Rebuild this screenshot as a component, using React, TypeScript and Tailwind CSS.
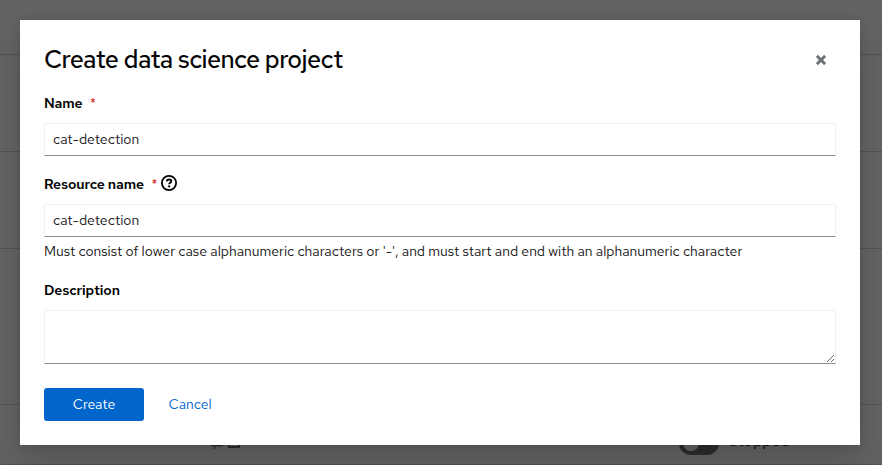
import React from 'react';

const inputClass =
  'block w-full border border-[#f0f0f0] border-b-[#8a8d90] bg-white px-2 text-[14px] leading-[21px] text-[#151515] outline-none';

function Required() {
  return <span className="ml-[7.5px] text-[13px] font-normal text-[#c9190b]">*</span>;
}

function HelpIcon() {
  return (
    <svg className="ml-[3.5px] h-4 w-4 -translate-y-[2px]" viewBox="0 0 16 16" fill="none" stroke="#030303">
      <circle cx="8" cy="8" r="7.1" strokeWidth="1.8" />
      <path d="M5.8 6.3C6 4.9 6.9 4.5 8.1 4.5c1.3 0 2.2.7 2.2 1.7 0 1.5-2.1 1.5-2.1 3" strokeWidth="1.9" />
      <circle cx="8.15" cy="11.4" r="1.1" fill="#030303" stroke="none" />
    </svg>
  );
}

function TableBehind() {
  return (
    <div className="h-[465px] w-full bg-white">
      <div className="h-[55px] border-b border-[#d2d2d2]" />
      <div className="h-[97px] border-b border-[#d2d2d2]" />
      <div className="h-[97px] border-b border-[#d2d2d2]" />
      <div className="h-[156px] border-b border-[#d2d2d2]" />
      <div className="flex h-[60px] items-start border-b border-[#d2d2d2] pt-[26px]">
        <svg className="ml-[210px] mt-[3px] h-[16px] w-[32px]" viewBox="0 0 32 16" fill="none" stroke="#6a6e73">
          <path d="M1 11.5H13M4.5 4V15M9 11.5H13" strokeWidth="1.3" />
          <rect x="19" y="3" width="10" height="10" strokeWidth="2" />
        </svg>
        <div className="ml-[437px] h-6 w-10 rounded-full bg-[#6a6e73] p-[4px]">
          <div className="h-4 w-4 rounded-full bg-white" />
        </div>
        <span className="ml-[9px] -mt-px text-[16px] leading-[22px] text-[#151515]">Stopped</span>
      </div>
    </div>
  );
}

export default function App() {
  return (
    <div className="relative h-[465px] w-full overflow-hidden font-['Red_Hat_Text','Inter','Liberation_Sans',sans-serif]">
      <TableBehind />
      <div className="absolute inset-0 bg-[#030303]/62 p-5">
        <div
          role="dialog"
          aria-modal="true"
          className="h-[425px] w-[840px] bg-white px-6 pt-6 text-[#030303] shadow-[0_16px_32px_0_rgba(3,3,3,0.16),0_0_8px_0_rgba(3,3,3,0.1)]"
        >
          <header className="flex h-[31px] items-center justify-between">
            <h1 className="whitespace-nowrap text-[25px] font-medium leading-[31px] tracking-[-0.56px]">
              Create data science project
            </h1>
            <button aria-label="Close" className="mr-[10px] mt-[1px]">
              <svg className="h-[10px] w-[10px]" viewBox="0 0 10 10" stroke="#6a6e73" strokeWidth="2.9">
                <path d="M.9 .9 9.1 9.1M9.1 .9 .9 9.1" />
              </svg>
            </button>
          </header>

          <form>
            <label className="mt-[18px] flex h-[21px] items-center text-[14px] font-semibold leading-[21px] tracking-[-0.1px]">
              <span>Name</span>
              <Required />
            </label>
            <input className={`${inputClass} mt-[9px] h-[33px] pb-[2px]`} defaultValue="cat-detection" />

            <label className="mt-[18px] flex h-[21px] items-center text-[14px] font-semibold leading-[21px] tracking-[-0.1px]">
              <span>Resource name</span>
              <Required />
              <HelpIcon />
            </label>
            <input className={`${inputClass} mt-[9px] h-[33px] pb-[2px]`} defaultValue="cat-detection" />
            <p className="mt-[4px] whitespace-nowrap text-[14px] leading-[21px] text-[#151515]">
              Must consist of lower case alphanumeric characters or '-', and must start and end with an alphanumeric character
            </p>

            <label className="mt-[18px] flex h-[21px] items-center text-[14px] font-semibold leading-[21px] tracking-[-0.1px]">
              Description
            </label>
            <textarea className={`${inputClass} mt-[9px] h-[54px] resize-y`} />

            <footer className="mt-[24px] flex text-[14px] leading-[21px]">
              <button type="button" className="h-[33px] w-[100px] rounded-[3px] bg-[#0066cc] text-white">
                Create
              </button>
              <button type="button" className="ml-[24.5px] h-[33px] text-[#0066cc]">
                Cancel
              </button>
            </footer>
          </form>
        </div>
      </div>
    </div>
  );
}
